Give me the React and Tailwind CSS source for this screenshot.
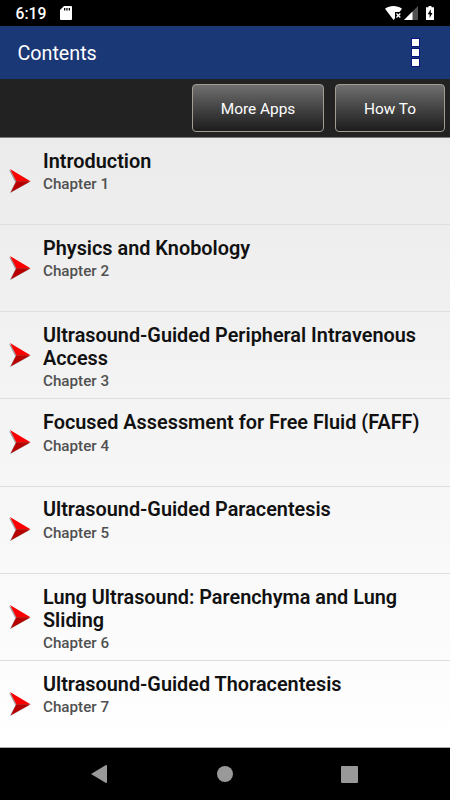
const chapters = [
  { title: 'Introduction', label: 'Chapter 1' },
  { title: 'Physics and Knobology', label: 'Chapter 2' },
  { title: 'Ultrasound-Guided Peripheral Intravenous Access', label: 'Chapter 3' },
  { title: 'Focused Assessment for Free Fluid (FAFF)', label: 'Chapter 4' },
  { title: 'Ultrasound-Guided Paracentesis', label: 'Chapter 5' },
  { title: 'Lung Ultrasound: Parenchyma and Lung Sliding', label: 'Chapter 6' },
  { title: 'Ultrasound-Guided Thoracentesis', label: 'Chapter 7' },
];

function StatusBar() {
  return (
    <div className="flex h-[26px] shrink-0 items-center justify-between bg-black pl-[15.5px] pr-4 text-white">
      <div className="flex items-center gap-[14px]">
        <span className="pt-[2px] text-[15.7px] leading-none font-medium">6:19</span>
        <svg className="h-[14px] w-[12px]" viewBox="0 0 12 14" fill="currentColor">
          <path d="M4 0h7q1 0 1 1v12q0 1-1 1H1q-1 0-1-1V4z" />
          <path d="M4 2h1.3v2.6H4zM6.3 2h1.3v2.6H6.3zM8.7 2H10v2.6H8.7z" fill="#000" />
        </svg>
      </div>
      <div className="flex items-center">
        <svg className="h-[14px] w-[17px]" viewBox="0 0 17 14">
          <path d="M0 2.8C4.8-.9 12.2-.9 17 2.8L14.5 6H10v6.2L8.5 14z" fill="#fff" />
          <path d="M11.5 7.5l3.8 4M15.3 7.5l-3.8 4" stroke="#fff" strokeWidth="1.3" />
        </svg>
        <svg className="ml-[2px] h-[14px] w-[14px]" viewBox="0 0 14 14">
          <path d="M14 0v14H0z" fill="#505050" />
          <path d="M8.5 5.5V14H0z" fill="#fff" />
        </svg>
        <svg className="ml-2 h-[14px] w-[8px]" viewBox="0 0 8 14">
          <path d="M2.5 0h3v1.3H8V14H0V1.3h2.5z" fill="#fff" />
          <path d="M4.8 3.2L1.7 8.3h1.9v3.6l2.9-5H4.8z" fill="#000" />
        </svg>
      </div>
    </div>
  );
}

function AppBar() {
  return (
    <header className="flex h-[53px] shrink-0 items-center justify-between bg-[#1a3776] pl-[17.5px] pr-[30.5px] text-white">
      <h1 className="pt-[2px] text-[19.7px] leading-none">Contents</h1>
      <div className="flex flex-col gap-px">
        {[0, 1, 2].map((dot) => (
          <span key={dot} className="h-[9px] w-[9px] border border-[#0c1480] bg-white" />
        ))}
      </div>
    </header>
  );
}

function ToolButton({ className, children }) {
  return (
    <button
      className={`h-12 rounded-[4px] border border-[#a39d93] bg-linear-to-b from-[#707070] to-[#1d1d1d] pt-[3px] text-[15.4px] text-white ${className}`}
    >
      {children}
    </button>
  );
}

function Arrow() {
  return (
    <svg
      className="mt-[30.8px] ml-[9px] h-6 w-[22px] shrink-0 drop-shadow-[-1px_1px_0.5px_rgba(0,0,0,0.35)]"
      viewBox="0 0 22 24"
    >
      <path d="M1 0L21.5 12.2H7.3z" fill="#fb0000" />
      <path d="M1.8 23.3L7.3 12.2h14.2z" fill="#b90000" />
    </svg>
  );
}

function ChapterRow({ title, label }) {
  return (
    <li className="flex h-[87.15px] shrink-0 border-b border-[#dedede] last:border-[#aaa]">
      <Arrow />
      <div className="ml-3 w-[390px] pt-[11.8px]">
        <h2 className="text-[19.85px] leading-[23px] font-semibold text-[#111]">{title}</h2>
        <p className="mt-[1.3px] text-[15.2px] leading-[20px] font-medium text-[#505050]">{label}</p>
      </div>
    </li>
  );
}

function NavBar() {
  return (
    <nav className="flex h-[52px] shrink-0 items-center justify-between bg-black pl-[91px] pr-[92px] text-[#999]">
      <svg className="h-[18px] w-4" viewBox="0 0 16 18" fill="currentColor">
        <path d="M0 9L14.5.3Q16-.4 16 1v16q0 1.4-1.5.7z" />
      </svg>
      <span className="ml-px h-4 w-4 rounded-full bg-current" />
      <span className="h-[17px] w-[17px] rounded-[1px] bg-current" />
    </nav>
  );
}

export default function App() {
  return (
    <div className="flex h-[800px] w-[450px] flex-col overflow-hidden bg-black font-[Roboto,sans-serif]">
      <StatusBar />
      <AppBar />
      <div className="flex h-[59px] shrink-0 items-start justify-end gap-[11px] border-b border-[#777] bg-[#222] pt-[5px] pr-[5px]">
        <ToolButton className="w-[132px]">More Apps</ToolButton>
        <ToolButton className="w-[110px]">How To</ToolButton>
      </div>
      <ul className="flex min-h-0 flex-1 flex-col overflow-hidden bg-linear-to-b from-[#ebebeb] to-white">
        {chapters.map((chapter) => (
          <ChapterRow key={chapter.label} {...chapter} />
        ))}
      </ul>
      <NavBar />
    </div>
  );
}
